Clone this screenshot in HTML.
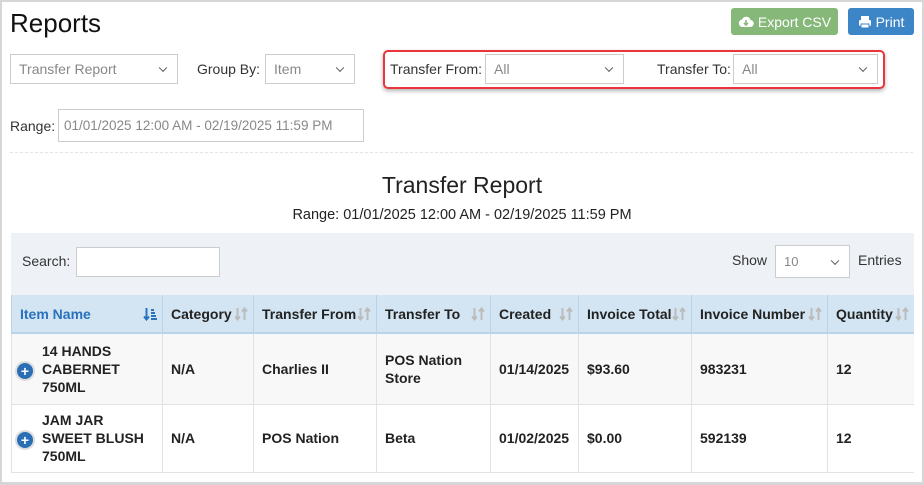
<!DOCTYPE html>
<html><head><meta charset="utf-8"><style>
*{box-sizing:border-box;margin:0;padding:0}
body{width:924px;height:485px;background:#fff;font-family:"Liberation Sans",Arial,sans-serif;position:relative;overflow:hidden;color:#333}
.frame{position:absolute;left:0;top:0;width:924px;height:485px;border:2px solid #d6d6d6;border-bottom-width:3px}
.a{position:absolute}
.sel{position:absolute;border:1px solid #ccc;background:#fff;color:#888;font-size:14px;padding-left:8px;display:flex;align-items:center}
.dd:after{content:"";position:absolute;right:11px;top:50%;width:5px;height:5px;border-right:1.6px solid #555;border-bottom:1.6px solid #555;transform:translateY(-70%) rotate(45deg)}
.lbl{position:absolute;font-size:14px;color:#333}
.btn{position:absolute;color:#fff;font-size:14px;border-radius:3px;display:flex;align-items:center;justify-content:center;gap:4px}
table{position:absolute;left:11px;top:295px;width:903px;border-collapse:collapse;font-size:14px}
th{background:#d3e5f2;text-align:left;padding:0 8px;height:38px;border-left:1px solid #b9d3e6;border-bottom:2px solid #b8d4ea;font-weight:bold;color:#222;position:relative;white-space:nowrap}
th svg{position:absolute;right:5px;top:12px}
td{font-weight:bold;color:#222;padding:0 8px;border-left:1px solid #e2e2e2;border-bottom:1px solid #e2e2e2;line-height:18px}
tr.r1 td{background:#f8f8f8;height:71px}
tr.r2 td{background:#fff;height:68px}
.plus{display:inline-block;width:16px;height:16px;border-radius:50%;background:#2a6fb5;color:#fff;font-size:14px;line-height:16px;text-align:center;box-shadow:0 0 0 2px #ddd;position:absolute;left:5px;top:50%;margin-top:-6px}
</style></head><body>
<svg width="0" height="0" style="position:absolute"><defs><g id="srt"><path d="M3.5 1v11M1 9.5l2.5 3 2.5-3M10.5 13V2M8 4.5l2.5-3 2.5 3" stroke="#bcbcbc" stroke-width="2" fill="none"/></g></defs></svg>
<div class="frame"></div>
<div class="a" style="left:10px;top:8px;font-size:26px;color:#111">Reports</div>
<div class="btn" style="left:731px;top:8px;width:107px;height:27px;background:#86b87a"><svg width="16" height="14" viewBox="0 0 16 14"><path d="M4 12h8a3.5 3.5 0 0 0 .5-7A4.5 4.5 0 0 0 4 4.5 3.8 3.8 0 0 0 4 12z" fill="#fff"/><path d="M8 5v5M6 8l2 2 2-2" stroke="#86b87a" stroke-width="1.6" fill="none"/></svg>Export CSV</div>
<div class="btn" style="left:848px;top:8px;width:66px;height:27px;background:#3c86c8"><svg width="14" height="14" viewBox="0 0 14 14"><rect x="3" y="1" width="8" height="4" fill="#fff"/><rect x="1" y="5" width="12" height="6" rx="1.5" fill="#fff"/><rect x="3" y="9" width="8" height="4" fill="#fff" stroke="#3c86c8"/></svg>Print</div>
<div class="sel dd" style="left:10px;top:54px;width:168px;height:30px">Transfer Report</div>
<div class="lbl" style="left:197px;top:61px">Group By:</div>
<div class="sel dd" style="left:265px;top:54px;width:90px;height:30px">Item</div>
<div class="a" style="left:383px;top:50px;width:502px;height:39px;border:2px solid #e8363c;border-radius:5px;box-shadow:0 2px 4px rgba(0,0,0,.3)"></div>
<div class="lbl" style="left:390px;top:61px">Transfer From:</div>
<div class="sel dd" style="left:485px;top:54px;width:139px;height:30px">All</div>
<div class="lbl" style="left:657px;top:61px">Transfer To:</div>
<div class="sel dd" style="left:733px;top:54px;width:145px;height:30px">All</div>
<div class="lbl" style="left:10px;top:118px">Range:</div>
<div class="sel" style="left:58px;top:109px;width:306px;height:33px;padding-left:5px;color:#888;font-size:13.5px">01/01/2025 12:00 AM - 02/19/2025 11:59 PM</div>
<div class="a" style="left:10px;top:152px;width:903px;border-top:1px dashed #e4e4e4"></div>
<div class="a" style="left:0;width:924px;top:172px;text-align:center;font-size:23px;color:#222">Transfer Report</div>
<div class="a" style="left:0;width:924px;top:207px;text-align:center;font-size:14.5px;color:#222">Range: 01/01/2025 12:00 AM - 02/19/2025 11:59 PM</div>
<div class="a" style="left:11px;top:233px;width:903px;height:62px;background:#eef2f6"></div>
<div class="lbl" style="left:22px;top:253px">Search:</div>
<div class="a" style="left:76px;top:247px;width:144px;height:30px;border:1px solid #ccc;background:#fff"></div>
<div class="lbl" style="left:732px;top:252px">Show</div>
<div class="sel dd" style="left:775px;top:245px;width:75px;height:33px;font-size:13px">10</div>
<div class="lbl" style="left:858px;top:252px">Entries</div>
<table>
<tr><th style="width:151px;color:#2a72bd">Item Name<svg width="14" height="14"><path d="M3.5 1v11M1 9.5l2.5 3 2.5-3M8 3h3M8 6h4M8 9h5M8 12h6" stroke="#2a72bd" stroke-width="2" fill="none"/></svg></th><th style="width:91px">Category<svg width="14" height="14"><use href="#srt"/></svg></th><th style="width:123px">Transfer From<svg width="14" height="14"><use href="#srt"/></svg></th><th style="width:114px">Transfer To<svg width="14" height="14"><use href="#srt"/></svg></th><th style="width:88px">Created<svg width="14" height="14"><use href="#srt"/></svg></th><th style="width:113px">Invoice Total<svg width="14" height="14"><use href="#srt"/></svg></th><th style="width:136px">Invoice Number<svg width="14" height="14"><use href="#srt"/></svg></th><th>Quantity<svg width="14" height="14"><use href="#srt"/></svg></th></tr>
<tr class="r1"><td style="position:relative;padding-left:30px"><span class="plus">+</span>14 HANDS<br>CABERNET<br>750ML</td><td>N/A</td><td>Charlies II</td><td>POS Nation<br>Store</td><td>01/14/2025</td><td>$93.60</td><td>983231</td><td>12</td></tr>
<tr class="r2"><td style="position:relative;padding-left:30px"><span class="plus">+</span>JAM JAR<br>SWEET BLUSH<br>750ML</td><td>N/A</td><td>POS Nation</td><td>Beta</td><td>01/02/2025</td><td>$0.00</td><td>592139</td><td>12</td></tr>
</table>
</body></html>
